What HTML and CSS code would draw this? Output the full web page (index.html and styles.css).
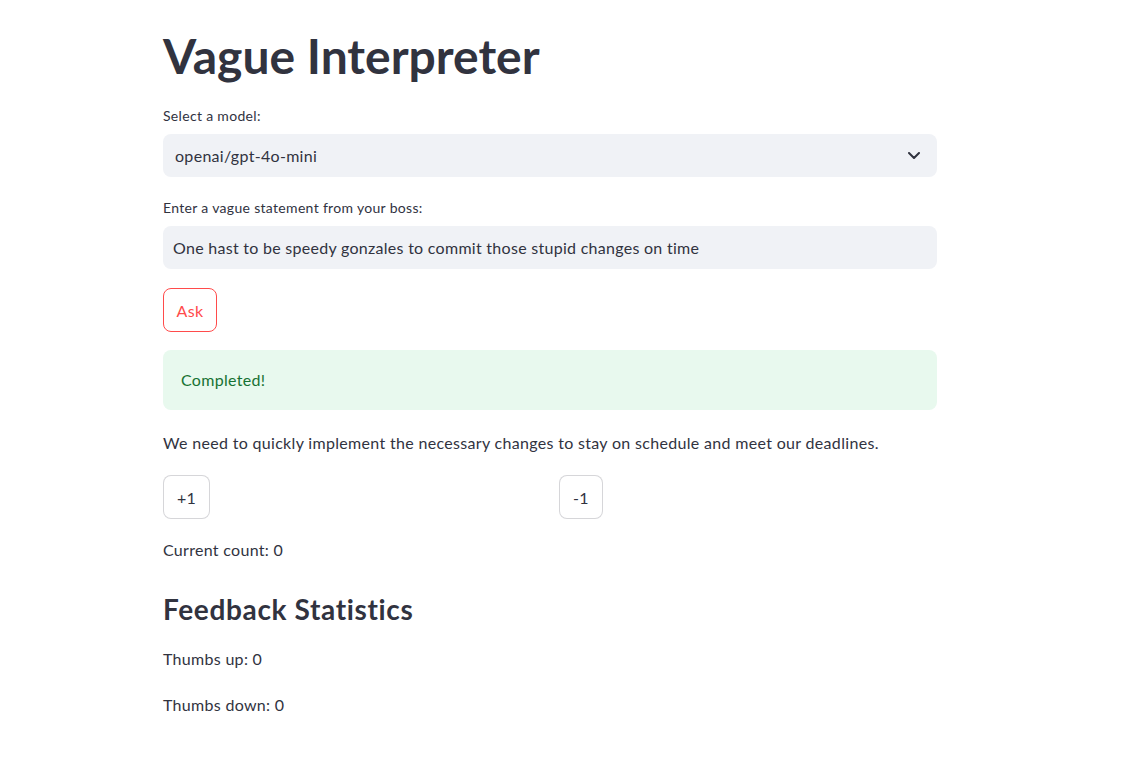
FILE: index.html
```html
<!DOCTYPE html>
<html lang="en">
<head>
<meta charset="utf-8">
<title>Vague Interpreter</title>
<link rel="stylesheet" href="styles.css">
</head>
<body>
<main class="main">
  <h1 class="title">Vague Interpreter</h1>

  <div class="field field-first">
    <label class="label">Select a model:</label>
    <div class="select">
      <span class="select-value">openai/gpt-4o-mini</span>
      <svg class="chevron" width="12" height="7" viewBox="0 0 12 7"><polyline points="1,1 6,6 11,1" fill="none" stroke="#31333F" stroke-width="2" stroke-linecap="round" stroke-linejoin="round"/></svg>
    </div>
  </div>

  <div class="field field-second">
    <label class="label">Enter a vague statement from your boss:</label>
    <div class="input">One hast to be speedy gonzales to commit those stupid changes on time</div>
  </div>

  <div class="row-ask">
    <button class="btn btn-primary">Ask</button>
  </div>

  <div class="alert">Completed!</div>

  <p class="text text-answer">We need to quickly implement the necessary changes to stay on schedule and meet our deadlines.</p>

  <div class="columns">
    <div class="col"><button class="btn">+1</button></div>
    <div class="col"><button class="btn">-1</button></div>
  </div>

  <p class="text text-count">Current count: 0</p>

  <h3 class="subtitle">Feedback Statistics</h3>

  <p class="text text-up">Thumbs up: 0</p>
  <p class="text text-down">Thumbs down: 0</p>
</main>
</body>
</html>
```

FILE: styles.css
```css
* { box-sizing: border-box; }

html, body {
  margin: 0;
  padding: 0;
  background: #ffffff;
}

body {
  font-family: "Lato", "Liberation Sans", sans-serif;
  color: #31333F;
  font-size: 16px;
  letter-spacing: 0.3px;
}

.main {
  width: 774px;
  margin-left: 163px;
  padding-top: 28px;
  display: flex;
  flex-direction: column;
}

.title {
  margin: 0;
  font-size: 48px;
  line-height: 55px;
  font-weight: 700;
  letter-spacing: 0;
}

.field { display: flex; flex-direction: column; }
.field-first { margin-top: 23px; }
.field-second { margin-top: 21px; }

.label {
  font-size: 14px;
  line-height: 20px;
  margin-bottom: 8px;
  letter-spacing: 0.32px;
}

.select,
.input {
  height: 43px;
  background: #F0F2F6;
  border-radius: 8px;
  display: flex;
  align-items: center;
  font-size: 16px;
}

.select {
  padding: 0 17px 0 12px;
  justify-content: space-between;
}

.input { padding: 0 10px; letter-spacing: 0.28px; }

.row-ask { margin-top: 19px; }

.btn {
  font-family: inherit;
  font-size: 16px;
  letter-spacing: inherit;
  height: 44px;
  padding: 0 13px;
  background: #ffffff;
  color: #31333F;
  border: 1px solid rgba(49, 51, 63, 0.2);
  border-radius: 8px;
  cursor: pointer;
}

.btn-primary {
  color: #FF4B4B;
  border-color: #FF4B4B;
  width: 54px;
  padding: 0;
}

.alert {
  margin-top: 18px;
  background: #E8F9EE;
  color: #177233;
  border-radius: 8px;
  padding: 16px 18px;
  line-height: 28px;
}

.text {
  margin: 0;
  line-height: 24px;
}

.text-answer { margin-top: 21px; letter-spacing: 0.32px; }

.columns {
  margin-top: 20px;
  display: grid;
  grid-template-columns: 1fr 1fr;
  column-gap: 18px;
}

.text-count { margin-top: 19px; }

.subtitle {
  margin: 30px 0 0;
  font-size: 28px;
  line-height: 34px;
  font-weight: 700;
  letter-spacing: 0.65px;
}

.text-up { margin-top: 21px; }
.text-down { margin-top: 22px; }
```
